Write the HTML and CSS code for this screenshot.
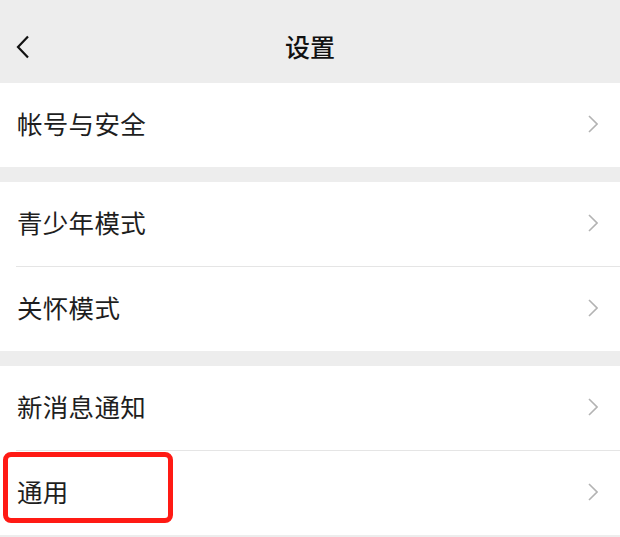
FILE: index.html
```html
<!DOCTYPE html>
<html lang="zh-CN">
<head>
<meta charset="utf-8">
<link rel="stylesheet" href="styles.css">
</head>
<body>
<div class="page">
  <header class="nav">
    <svg class="back" width="14" height="24" viewBox="0 0 14 24"><path d="M12 1.5 L2 12 L12 22.5" fill="none" stroke="#111" stroke-width="2.2"/></svg>
    <div class="title">设置</div>
  </header>
  <section class="group">
    <div class="row"><span class="label">帐号与安全</span><svg class="arrow" width="10" height="18" viewBox="0 0 10 18"><path d="M1 1 L9 9 L1 17" fill="none" stroke="#b3b3b3" stroke-width="1.6"/></svg></div>
  </section>
  <section class="group">
    <div class="row"><span class="label">青少年模式</span><svg class="arrow" width="10" height="18" viewBox="0 0 10 18"><path d="M1 1 L9 9 L1 17" fill="none" stroke="#b3b3b3" stroke-width="1.6"/></svg></div>
    <div class="row"><span class="label">关怀模式</span><svg class="arrow" width="10" height="18" viewBox="0 0 10 18"><path d="M1 1 L9 9 L1 17" fill="none" stroke="#b3b3b3" stroke-width="1.6"/></svg></div>
  </section>
  <section class="group">
    <div class="row"><span class="label">新消息通知</span><svg class="arrow" width="10" height="18" viewBox="0 0 10 18"><path d="M1 1 L9 9 L1 17" fill="none" stroke="#b3b3b3" stroke-width="1.6"/></svg></div>
    <div class="row"><span class="label">通用</span><svg class="arrow" width="10" height="18" viewBox="0 0 10 18"><path d="M1 1 L9 9 L1 17" fill="none" stroke="#b3b3b3" stroke-width="1.6"/></svg><div class="mark"></div></div>
  </section>
</div>
</body>
</html>
```
FILE: styles.css
```css
html, body {
  margin: 0;
  padding: 0;
  background: #ededed;
}
body {
  font-family: "Noto Sans CJK SC", "Noto Sans", sans-serif;
  color: #1b1b1b;
  width: 620px;
  height: 537px;
  overflow: hidden;
}
.page {
  display: flex;
  flex-direction: column;
  gap: 15px;
}
.nav {
  position: relative;
  height: 83px;
  display: flex;
  align-items: center;
  justify-content: center;
  background: #ededed;
  margin-bottom: -15px;
}
.back {
  position: absolute;
  left: 16px;
  top: 35px;
}
.title {
  font-size: 25px;
  font-weight: 500;
  color: #111;
  margin-top: 9px;
}
.group {
  background: #fff;
  display: flex;
  flex-direction: column;
}
.row {
  position: relative;
  height: 84px;
  display: flex;
  align-items: center;
  justify-content: space-between;
  padding: 0 22px 0 17px;
  box-sizing: border-box;
}
.row + .row {
  height: 85px;
  background: linear-gradient(#e5e5e5, #e5e5e5) no-repeat 16px 0 / calc(100% - 16px) 1px;
  padding-top: 1px;
}
.label {
  font-size: 25.5px;
  letter-spacing: 0.3px;
  color: #1e1e1e;
  margin-bottom: 5px;
}
.arrow {
  margin-bottom: 2px;
}
.mark {
  position: absolute;
  left: 3px;
  top: 2px;
  width: 160px;
  height: 61px;
  border: 5px solid #ff1a14;
  border-radius: 8px;
}
```
